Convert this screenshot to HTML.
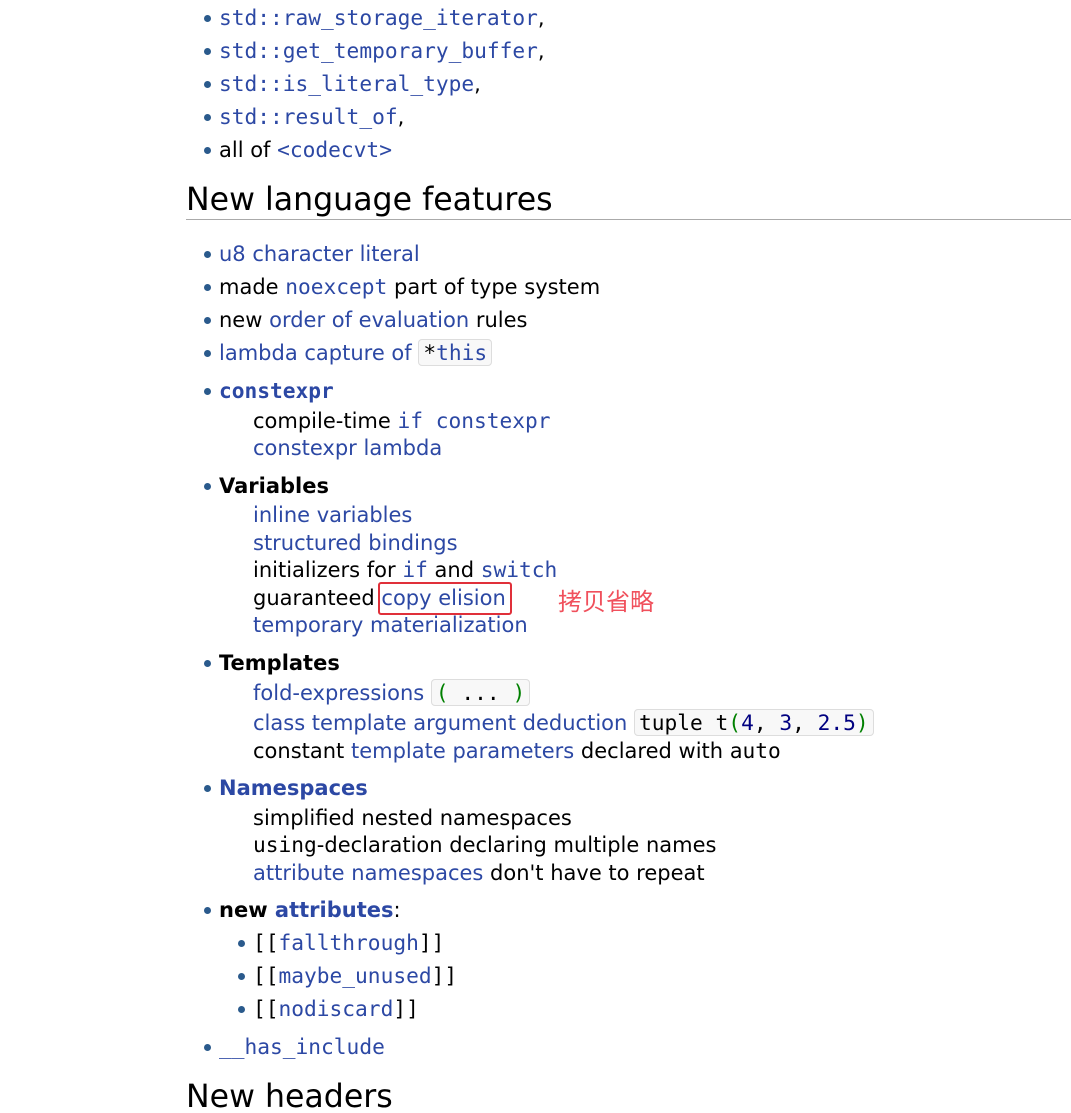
<!DOCTYPE html>
<html><head><meta charset="utf-8"><style>
html,body{margin:0;padding:0;background:#fff;width:1071px;height:1113px;overflow:hidden;position:relative}
body{font-family:"DejaVu Sans","Liberation Sans",sans-serif;font-size:21px;color:#000}
.l{position:absolute;white-space:nowrap;line-height:26px;height:26px}
.b::before{content:"";position:absolute;left:-15px;top:10px;width:7px;height:7px;border-radius:50%;background:#2a5a8c}
a{color:#2c48a4;text-decoration:none}
.m{font-family:"DejaVu Sans Mono","Liberation Mono",monospace;font-size:21.2px}
.k{font-weight:bold}
.box{background:#f8f8f8;border:1px solid #ddd;border-radius:4px;padding:0 4px;font-family:"DejaVu Sans Mono","Liberation Mono",monospace;font-size:21.2px}
h2{position:absolute;margin:0;font-weight:normal;font-size:31.6px;line-height:36px;left:186px}
.hr{position:absolute;left:186px;right:0;top:219px;height:1px;background:#aaa}
</style></head><body>
<div class="l b" style="top:5px;left:219px"><a class="m">std::raw_storage_iterator</a>,</div>
<div class="l b" style="top:38px;left:219px"><a class="m">std::get_temporary_buffer</a>,</div>
<div class="l b" style="top:71px;left:219px"><a class="m">std::is_literal_type</a>,</div>
<div class="l b" style="top:104px;left:219px"><a class="m">std::result_of</a>,</div>
<div class="l b" style="top:137px;left:219px">all of <a class="m">&lt;codecvt&gt;</a></div>
<h2 style="top:182px">New language features</h2>
<div class="hr"></div>
<div class="l b" style="top:241px;left:219px"><a>u8 character literal</a></div>
<div class="l b" style="top:274px;left:219px">made <a class="m">noexcept</a> part of type system</div>
<div class="l b" style="top:307px;left:219px">new <a>order of evaluation</a> rules</div>
<div class="l b" style="top:340px;left:219px"><a>lambda capture of</a> <span class="box">*<a>this</a></span></div>
<div class="l b" style="top:378px;left:219px"><a class="m k">constexpr</a></div>
<div class="l" style="top:408px;left:253px">compile-time <a class="m">if constexpr</a></div>
<div class="l" style="top:435px;left:253px"><a>constexpr lambda</a></div>
<div class="l b k" style="top:473px;left:219px">Variables</div>
<div class="l" style="top:502px;left:253px"><a>inline variables</a></div>
<div class="l" style="top:530px;left:253px"><a>structured bindings</a></div>
<div class="l" style="top:557px;left:253px">initializers for <a class="m">if</a> and <a class="m">switch</a></div>
<div class="l" style="top:585px;left:253px">guaranteed <a>copy elision</a></div>
<div style="position:absolute;left:378px;top:582px;width:130px;height:29px;border:2px solid #e0303a;border-radius:3px"></div>
<div class="l" style="top:585px;left:558px;font-family:'Noto Sans CJK SC',sans-serif;font-size:24px;color:#f0505c;line-height:30px">拷贝省略</div>
<div class="l" style="top:612px;left:253px"><a>temporary materialization</a></div>
<div class="l b k" style="top:650px;left:219px">Templates</div>
<div class="l" style="top:680px;left:253px"><a>fold-expressions</a> <span class="box"><span style="color:#008000">(</span> ... <span style="color:#008000">)</span></span></div>
<div class="l" style="top:710px;left:253px"><a>class template argument deduction</a> <span class="box">tuple t<span style="color:#008000">(</span><span style="color:#000080">4</span>, <span style="color:#000080">3</span>, <span style="color:#000080">2.5</span><span style="color:#008000">)</span></span></div>
<div class="l" style="top:738px;left:253px">constant <a>template parameters</a> declared with <span class="m">auto</span></div>
<div class="l b k" style="top:775px;left:219px"><a>Namespaces</a></div>
<div class="l" style="top:805px;left:253px">simplified nested namespaces</div>
<div class="l" style="top:832px;left:253px"><span class="m">using</span>-declaration declaring multiple names</div>
<div class="l" style="top:860px;left:253px"><a>attribute namespaces</a> don't have to repeat</div>
<div class="l b" style="top:897px;left:219px"><b>new <a>attributes</a></b>:</div>
<div class="l b m" style="top:930px;left:253px">[[<a>fallthrough</a>]]</div>
<div class="l b m" style="top:963px;left:253px">[[<a>maybe_unused</a>]]</div>
<div class="l b m" style="top:996px;left:253px">[[<a>nodiscard</a>]]</div>
<div class="l b" style="top:1034px;left:219px"><a class="m">__has_include</a></div>
<h2 style="top:1079px">New headers</h2>
</body></html>
